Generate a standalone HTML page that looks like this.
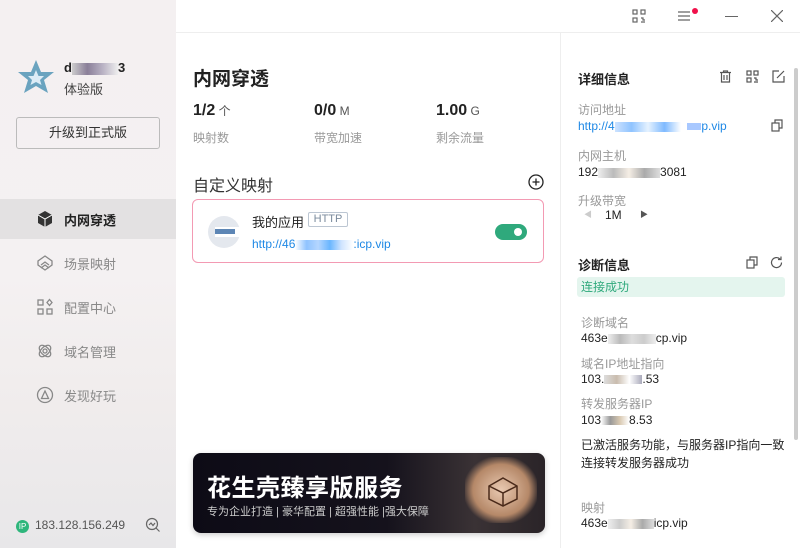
<!DOCTYPE html>
<html><head><meta charset="utf-8"><style>
*{margin:0;padding:0;box-sizing:border-box}
body{width:800px;height:548px;overflow:hidden;font-family:"Liberation Sans","Noto Sans CJK SC",sans-serif;background:#fff;position:relative;color:#222}
.abs{position:absolute}
#side{left:0;top:0;width:176px;height:548px;background:linear-gradient(#f4f0f1 0%,#f4f1f2 50%,#f1eded 70%,#e8e7e9 100%)}
.nav{position:absolute;left:0;width:176px;height:40px;font-size:13px;color:#888;display:flex;align-items:center}
.nav span{position:absolute;left:64px}
.nav svg{position:absolute;left:36px}
.t{font-size:12px;color:#999}
.v{font-size:12px;color:#222}
.link{font-size:12px;color:#1e88e5}
</style></head><body>
<div id="side" class="abs">
  <svg class="abs" style="left:16px;top:58px" width="40" height="38" viewBox="0 0 40 38"><path d="M20 2 L25 14 L38 14 L28 22 L32 35 L20 28 L8 35 L12 22 L2 14 L15 14Z" fill="#6aa3bf"/><path d="M20 12 L22.5 18 L28 18 L24 22 L25.5 27 L20 24 L14.5 27 L16 22 L12 18 L17.5 18Z" fill="#dcecf6"/></svg>
  <div class="abs" style="left:64px;top:60px;font-size:13px;font-weight:bold">d<span style="display:inline-block;width:46px;height:12px;background:linear-gradient(90deg,#ccc,#8a7f99,#b9b2c4,#eee);vertical-align:middle"></span>3</div>
  <div class="abs" style="left:64px;top:79px;font-size:13px;color:#444">体验版</div>
  <div class="abs" style="left:16px;top:117px;width:144px;height:32px;border:1px solid #bbb;border-radius:3px;font-size:13px;text-align:center;line-height:30px;color:#333">升级到正式版</div>
  <div class="nav" style="top:199px;background:#e3e1e2;color:#222;font-weight:bold"><svg width="18" height="18" viewBox="0 0 18 18"><path d="M9 1 L16 5 L16 13 L9 17 L2 13 L2 5Z" fill="#333"/><path d="M2 5 L9 9 L16 5 M9 9 V17" stroke="#fff" stroke-width="1" fill="none"/></svg><span>内网穿透</span></div>
  <div class="nav" style="top:243px"><svg width="18" height="18" viewBox="0 0 18 18" fill="none" stroke="#888" stroke-width="1.3"><path d="M9 2 L16 7 L16 11 L9 16 L2 11 L2 7Z"/><path d="M5 11 L9 8 L13 11 M5 14 L9 11 L13 14"/></svg><span>场景映射</span></div>
  <div class="nav" style="top:287px"><svg width="18" height="18" viewBox="0 0 18 18" fill="none" stroke="#888" stroke-width="1.3"><rect x="2" y="2" width="5" height="5"/><rect x="2" y="11" width="5" height="5"/><rect x="11" y="11" width="5" height="5"/><path d="M13.5 1.5 L16 4.5 L13.5 7.5 L11 4.5Z"/></svg><span>配置中心</span></div>
  <div class="nav" style="top:331px"><svg width="18" height="18" viewBox="0 0 18 18" fill="none" stroke="#888" stroke-width="1.3"><ellipse cx="9" cy="9" rx="7" ry="4" transform="rotate(45 9 9)"/><ellipse cx="9" cy="9" rx="7" ry="4" transform="rotate(-45 9 9)"/><circle cx="9" cy="9" r="2"/></svg><span>域名管理</span></div>
  <div class="nav" style="top:375px"><svg width="18" height="18" viewBox="0 0 18 18" fill="none" stroke="#888" stroke-width="1.3"><circle cx="9" cy="9" r="7.5"/><path d="M5.5 12.5 L9 5 L12.5 12.5Z"/></svg><span>发现好玩</span></div>
  <div class="abs" style="left:16px;top:520px;width:13px;height:13px;border-radius:50%;background:#2fb67c;color:#fff;font-size:8px;text-align:center;line-height:13px">IP</div>
  <div class="abs" style="left:35px;top:518px;font-size:12px;color:#555">183.128.156.249</div>
  <svg class="abs" style="left:145px;top:517px" width="16" height="16" viewBox="0 0 16 16" fill="none" stroke="#666" stroke-width="1.2"><circle cx="7" cy="7" r="5.5"/><path d="M11 11 L14.5 14.5 M4 8 L6 6 L8 8.5 L10 6"/></svg>
</div>
<div class="abs" style="left:176px;top:32px;width:624px;height:1px;background:#eee"></div>
<div class="abs" style="left:560px;top:33px;width:1px;height:515px;background:#eee"></div>
<svg class="abs" style="left:632px;top:9px" width="14" height="14" viewBox="0 0 14 14" fill="none" stroke="#666" stroke-width="1.2"><rect x="1" y="1" width="4" height="4"/><rect x="9" y="1" width="4" height="4"/><rect x="1" y="9" width="4" height="4"/><path d="M9 9h2v2h2 M9 13h4"/></svg>
<svg class="abs" style="left:678px;top:10px" width="14" height="12" viewBox="0 0 14 12" stroke="#666" stroke-width="1.2"><path d="M0 2h12M0 6h12M0 10h12"/></svg>
<div class="abs" style="left:692px;top:8px;width:6px;height:6px;border-radius:50%;background:#f0104a"></div>
<div class="abs" style="left:725px;top:16px;width:13px;height:1px;background:#666"></div>
<svg class="abs" style="left:771px;top:10px" width="12" height="12" viewBox="0 0 12 12" stroke="#666" stroke-width="1.2"><path d="M0 0L12 12M12 0L0 12"/></svg>
<div class="abs" style="left:193px;top:64px;font-size:19px;font-weight:bold">内网穿透</div>
<div class="abs" style="left:193px;top:102px;font-size:16px;font-weight:bold">1/2<span style="font-size:12px;font-weight:normal;color:#555"> 个</span></div>
<div class="abs" style="left:314px;top:102px;font-size:16px;font-weight:bold">0/0<span style="font-size:12px;font-weight:normal;color:#555"> M</span></div>
<div class="abs" style="left:436px;top:102px;font-size:16px;font-weight:bold">1.00<span style="font-size:12px;font-weight:normal;color:#555"> G</span></div>
<div class="abs t" style="left:193px;top:129px">映射数</div>
<div class="abs t" style="left:314px;top:129px">带宽加速</div>
<div class="abs t" style="left:436px;top:129px">剩余流量</div>
<div class="abs" style="left:193px;top:172px;font-size:16px;color:#333">自定义映射</div>
<svg class="abs" style="left:528px;top:174px" width="16" height="16" viewBox="0 0 16 16" fill="none" stroke="#222" stroke-width="1.3"><circle cx="8" cy="8" r="7"/><path d="M8 4.5v7M4.5 8h7"/></svg>
<div class="abs" style="left:192px;top:199px;width:352px;height:64px;border:1px solid #f39ab3;border-radius:6px"></div>
<div class="abs" style="left:208px;top:216px;width:32px;height:32px;border-radius:50%;background:#e4e8ee"></div>
<div class="abs" style="left:215px;top:227px;width:25px;height:10px;background:#fff"></div>
<div class="abs" style="left:215px;top:229px;width:20px;height:5px;background:#5d86b5"></div>
<div class="abs" style="left:252px;top:212px;font-size:13px;color:#222">我的应用</div>
<div class="abs" style="left:308px;top:212px;width:40px;height:15px;border:1px solid #bcc6d2;border-radius:2px;font-size:11px;color:#7a8a9c;text-align:center;line-height:13px">HTTP</div>
<div class="abs link" style="left:252px;top:237px">http://46<span style="display:inline-block;width:58px;height:10px;background:linear-gradient(90deg,#fff,#8fc3ff,#b5d6ff,#6ab6ff,#cfe4ff,#fff);vertical-align:middle"></span>:icp.vip</div>
<div class="abs" style="left:495px;top:224px;width:32px;height:16px;border-radius:8px;background:#2fa97c"></div>
<div class="abs" style="left:514px;top:228px;width:8px;height:8px;border-radius:50%;background:#fff"></div>
<div class="abs" style="left:193px;top:453px;width:352px;height:80px;border-radius:8px;background:linear-gradient(90deg,#0d0b16 0%,#15121c 55%,#3a3235 80%,#2a2428 100%);box-shadow:0 2px 6px rgba(0,0,0,.2);overflow:hidden">
  <div class="abs" style="left:272px;top:4px;width:72px;height:66px;border-radius:14px;background:radial-gradient(#e9c9b1,#b58868 55%,rgba(80,60,55,0) 75%);"></div>
  <svg class="abs" style="left:293px;top:22px" width="34" height="34" viewBox="0 0 34 34" fill="none" stroke="#4a2a1a" stroke-width="1.5"><path d="M17 3L31 11V24L17 31L3 24V11Z M3 11L17 18L31 11 M17 18V31"/></svg>
  <div class="abs" style="left:14px;top:15px;font-size:24px;font-weight:bold;color:#fff;letter-spacing:0.5px">花生壳臻享版服务</div>
  <div class="abs" style="left:14px;top:50px;font-size:11px;color:#ccc">专为企业打造 | 豪华配置 | 超强性能 |强大保障</div>
</div>
<div class="abs" style="left:794px;top:68px;width:4px;height:372px;background:#ccc;border-radius:2px"></div>
<div class="abs" style="left:578px;top:69px;font-size:13px;font-weight:bold">详细信息</div>
<svg class="abs" style="left:719px;top:70px" width="13" height="13" viewBox="0 0 13 13" fill="none" stroke="#555" stroke-width="1.2"><path d="M1 2.5h11M4.5 2.5V1h4v1.5M2.5 2.5V12h8V2.5M5 5v5M8 5v5"/></svg>
<svg class="abs" style="left:746px;top:70px" width="13" height="13" viewBox="0 0 13 13" fill="none" stroke="#555" stroke-width="1.2"><rect x="1" y="1" width="4" height="4"/><rect x="8" y="1" width="4" height="4"/><rect x="1" y="8" width="4" height="4"/><path d="M8 8h2v2h2M8 12h4"/></svg>
<svg class="abs" style="left:772px;top:70px" width="13" height="13" viewBox="0 0 13 13" fill="none" stroke="#555" stroke-width="1.2"><path d="M7 1H1v11h11V6M5 8l7-7"/></svg>
<div class="abs t" style="left:578px;top:101px">访问地址</div>
<div class="abs link" style="left:578px;top:119px">http://4<span style="display:inline-block;width:66px;height:10px;background:linear-gradient(90deg,#cde3ff,#8fc3ff,#e5f2ff,#7fbaff,#fff);vertical-align:middle"></span>&nbsp;&nbsp;<span style="display:inline-block;width:14px;height:7px;background:#a8c8ff;vertical-align:middle"></span>p.vip</div>
<svg class="abs" style="left:771px;top:119px" width="12" height="13" viewBox="0 0 12 13" fill="none" stroke="#555" stroke-width="1.2"><rect x="1" y="4" width="7" height="8"/><path d="M4 4V1h7v8H8"/></svg>
<div class="abs t" style="left:578px;top:147px">内网主机</div>
<div class="abs v" style="left:578px;top:165px">192<span style="display:inline-block;width:62px;height:10px;background:linear-gradient(90deg,#eee,#bbb,#f5eee5,#aaa,#ddd);vertical-align:middle"></span>3081</div>
<div class="abs t" style="left:578px;top:192px">升级带宽</div>
<div class="abs" style="left:584px;top:209px;font-size:8px;color:#ccc">◀</div>
<div class="abs v" style="left:605px;top:208px">1M</div>
<div class="abs" style="left:640px;top:209px;font-size:8px;color:#555">▶</div>
<div class="abs" style="left:578px;top:255px;font-size:13px;font-weight:bold">诊断信息</div>
<svg class="abs" style="left:746px;top:256px" width="12" height="13" viewBox="0 0 12 13" fill="none" stroke="#555" stroke-width="1.2"><rect x="1" y="4" width="7" height="8"/><path d="M4 4V1h7v8H8"/></svg>
<svg class="abs" style="left:770px;top:256px" width="13" height="13" viewBox="0 0 13 13" fill="none" stroke="#555" stroke-width="1.2"><path d="M11.5 6.5A5 5 0 1 1 10 3M11 0.5v3h-3"/></svg>
<div class="abs" style="left:577px;top:277px;width:208px;height:20px;background:#e4f5ee;border-radius:3px;font-size:12px;color:#2fa97c;padding-left:4px;line-height:20px">连接成功</div>
<div class="abs t" style="left:581px;top:314px">诊断域名</div>
<div class="abs v" style="left:581px;top:331px">463e<span style="display:inline-block;width:48px;height:10px;background:linear-gradient(90deg,#eee,#bbb,#ddd,#ccc,#eee);vertical-align:middle"></span>cp.vip</div>
<div class="abs t" style="left:581px;top:355px">域名IP地址指向</div>
<div class="abs v" style="left:581px;top:372px">103.<span style="display:inline-block;width:38px;height:9px;background:linear-gradient(90deg,#ddd,#c9bcae,#fff,#aab);vertical-align:middle"></span>.53</div>
<div class="abs t" style="left:581px;top:395px">转发服务器IP</div>
<div class="abs v" style="left:581px;top:413px">103<span style="display:inline-block;width:28px;height:9px;background:linear-gradient(90deg,#fff,#999,#d8c8b0,#fff);vertical-align:middle"></span>8.53</div>
<div class="abs v" style="left:581px;top:436px;line-height:18px">已激活服务功能，与服务器IP指向一致<br>连接转发服务器成功</div>
<div class="abs t" style="left:581px;top:499px">映射</div>
<div class="abs v" style="left:581px;top:516px">463e<span style="display:inline-block;width:46px;height:10px;background:linear-gradient(90deg,#eee,#ccc,#f5eee5,#aaa,#ddd);vertical-align:middle"></span>icp.vip</div>
</body></html>
